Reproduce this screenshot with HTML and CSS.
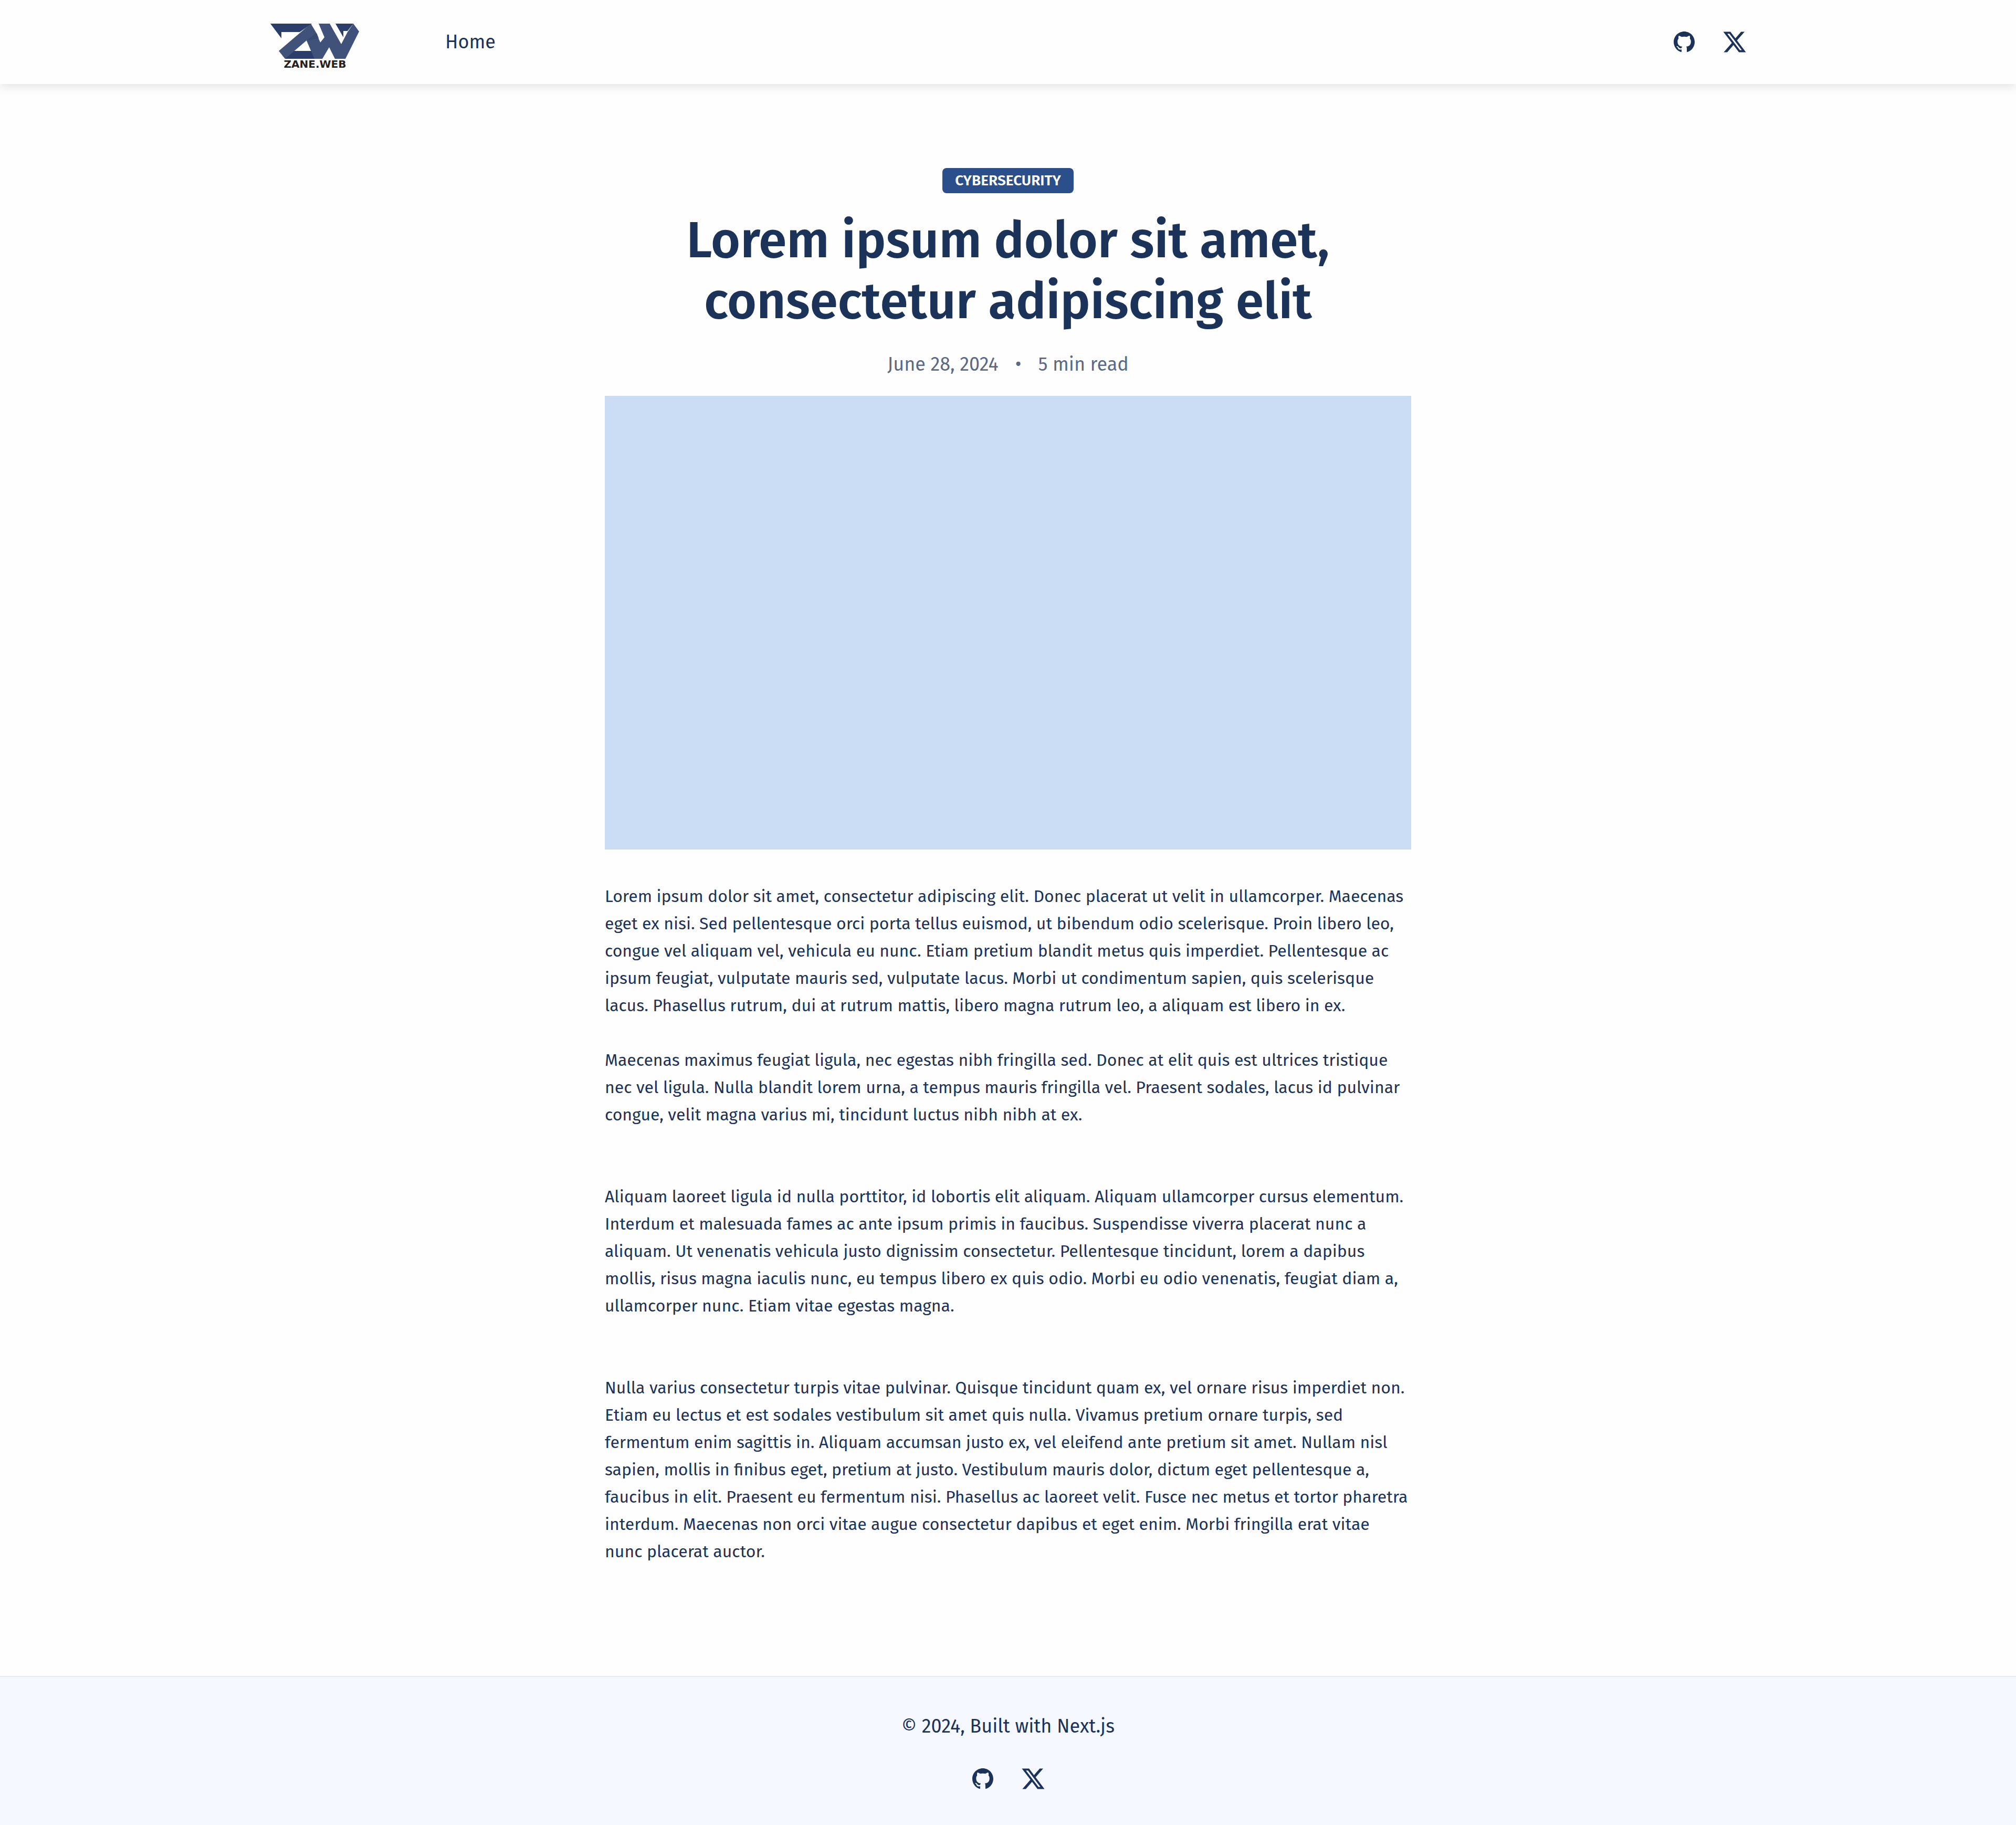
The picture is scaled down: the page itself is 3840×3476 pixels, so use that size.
FILE: index.html
```html
<!DOCTYPE html>
<html lang="en">
<head>
<meta charset="utf-8">
<meta name="viewport" content="width=device-width, initial-scale=1">
<title>Lorem ipsum dolor sit amet, consectetur adipiscing elit</title>
<link rel="stylesheet" href="styles.css">
</head>
<body>
<svg class="sprite" aria-hidden="true">
  <symbol id="icon-github" viewBox="0 0 24 24">
    <path d="M12.001 2C6.476 2 2.001 6.475 2.001 12c0 4.425 2.863 8.163 6.838 9.488.5.087.687-.213.687-.475 0-.238-.012-1.025-.012-1.863-2.513.463-3.163-.612-3.363-1.175-.112-.287-.6-1.175-1.025-1.412-.35-.188-.85-.65-.012-.663.787-.012 1.35.725 1.537 1.025.9 1.513 2.338 1.088 2.913.825.087-.65.35-1.087.637-1.337-2.225-.25-4.55-1.113-4.55-4.938 0-1.087.388-1.987 1.025-2.687-.1-.25-.45-1.275.1-2.65 0 0 .838-.263 2.75 1.025a9.28 9.28 0 0 1 2.5-.338c.85 0 1.7.113 2.5.338 1.913-1.3 2.75-1.025 2.75-1.025.55 1.375.2 2.4.1 2.65.638.7 1.025 1.587 1.025 2.687 0 3.838-2.337 4.688-4.562 4.938.362.312.675.912.675 1.85 0 1.337-.013 2.412-.013 2.75 0 .262.188.575.688.475A10.02 10.02 0 0 0 22.001 12c0-5.525-4.475-10-10-10Z"/>
  </symbol>
  <symbol id="icon-x" viewBox="0 0 24 24">
    <path d="M18.205 2.25h3.308l-7.227 8.26 8.502 11.24H16.13l-5.214-6.817L4.95 21.75H1.64l7.73-8.835L1.215 2.25H8.04l4.713 6.231 5.45-6.231Zm-1.161 17.52h1.833L7.045 4.126H5.078L17.044 19.77Z"/>
  </symbol>
</svg>

<header class="site-header">
  <div class="site-header__inner">
    <a class="logo" href="#" aria-label="Zane.Web">
      <svg class="logo__mark" viewBox="0 0 170 67" aria-hidden="true">
        <path fill="#2b3e6b" d="M0 0H79L56 16H21V28Z"/>
        <path fill="#2b3e6b" d="M37 52H78L86 67H28Z"/>
        <path fill="#384a74" d="M69 32 87 18 95 36 84 67Z"/>
        <path fill="#41527a" d="M77 0 89 20 69 32 28 67 16 52Z"/>
        <path fill="#41527a" d="M92 0H113L135 39 147 16 158 0 169 15 143 67H123L112 45 99 67H84L69 32 87 18 95 36 103 26Z"/>
        <path fill="#384a74" d="M69 32 87 18 89 20 92 28Z"/>
        <path fill="#2b3e6b" d="M124 0H158L147 14H139V26Z"/>
      </svg>
      <span class="logo__name">ZANE.WEB</span>
    </a>
    <nav class="nav" aria-label="Main"><a href="#">Home</a></nav>
    <div class="socials">
      <a href="#" aria-label="GitHub"><svg class="icon"><use href="#icon-github"/></svg></a>
      <a href="#" aria-label="X"><svg class="icon"><use href="#icon-x"/></svg></a>
    </div>
  </div>
</header>

<main class="article">
  <header class="article__head">
    <a class="tag" href="#">CYBERSECURITY</a>
    <h1 class="article__title">Lorem ipsum dolor sit amet, consectetur adipiscing elit</h1>
    <div class="article__meta"><time datetime="2024-06-28">June 28, 2024</time><span>•</span><span>5 min read</span></div>
  </header>
  <div class="article__cover"></div>
  <div class="article__body">
    <p>Lorem ipsum dolor sit amet, consectetur adipiscing elit. Donec placerat ut velit in ullamcorper. Maecenas
    eget ex nisi. Sed pellentesque orci porta tellus euismod, ut bibendum odio scelerisque. Proin libero leo,
    congue vel aliquam vel, vehicula eu nunc. Etiam pretium blandit metus quis imperdiet. Pellentesque ac
    ipsum feugiat, vulputate mauris sed, vulputate lacus. Morbi ut condimentum sapien, quis scelerisque
    lacus. Phasellus rutrum, dui at rutrum mattis, libero magna rutrum leo, a aliquam est libero in ex.</p>
    <p>Maecenas maximus feugiat ligula, nec egestas nibh fringilla sed. Donec at elit quis est ultrices tristique
    nec vel ligula. Nulla blandit lorem urna, a tempus mauris fringilla vel. Praesent sodales, lacus id pulvinar
    congue, velit magna varius mi, tincidunt luctus nibh nibh at ex.</p>
    <p class="section-start">Aliquam laoreet ligula id nulla porttitor, id lobortis elit aliquam. Aliquam ullamcorper cursus elementum.
    Interdum et malesuada fames ac ante ipsum primis in faucibus. Suspendisse viverra placerat nunc a
    aliquam. Ut venenatis vehicula justo dignissim consectetur. Pellentesque tincidunt, lorem a dapibus
    mollis, risus magna iaculis nunc, eu tempus libero ex quis odio. Morbi eu odio venenatis, feugiat diam a,
    ullamcorper nunc. Etiam vitae egestas magna.</p>
    <p class="section-start">Nulla varius consectetur turpis vitae pulvinar. Quisque tincidunt quam ex, vel ornare risus imperdiet non.
    Etiam eu lectus et est sodales vestibulum sit amet quis nulla. Vivamus pretium ornare turpis, sed
    fermentum enim sagittis in. Aliquam accumsan justo ex, vel eleifend ante pretium sit amet. Nullam nisl
    sapien, mollis in finibus eget, pretium at justo. Vestibulum mauris dolor, dictum eget pellentesque a,
    faucibus in elit. Praesent eu fermentum nisi. Phasellus ac laoreet velit. Fusce nec metus et tortor pharetra
    interdum. Maecenas non orci vitae augue consectetur dapibus et eget enim. Morbi fringilla erat vitae
    nunc placerat auctor.</p>
  </div>
</main>

<footer class="site-footer">
  <p>© 2024, Built with Next.js</p>
  <div class="socials">
    <a href="#" aria-label="GitHub"><svg class="icon"><use href="#icon-github"/></svg></a>
    <a href="#" aria-label="X"><svg class="icon"><use href="#icon-x"/></svg></a>
  </div>
</footer>
</body>
</html>
```

FILE: styles.css
```css
*, *::before, *::after { box-sizing: border-box; }

body {
  display: flex;
  flex-direction: column;
  min-height: 100vh;
  margin: 0;
  background: #fefefe;
  color: #1c3359;
  font-family: "Fira Sans", "Noto Sans", sans-serif;
  font-size: 32px;
  line-height: 52px;
}

a { color: inherit; text-decoration: none; }
p, h1 { margin: 0; }

.sprite { position: absolute; width: 0; height: 0; }

.site-header {
  background: #fefefe;
  box-shadow: 0 4px 20px rgba(0, 0, 0, 0.12);
}

.site-header__inner {
  display: flex;
  align-items: center;
  max-width: 2880px;
  height: 160px;
  margin: 0 auto;
  padding: 0 32px;
}

.logo {
  display: flex;
  flex-direction: column;
  align-items: center;
  width: 176px;
  padding-top: 16px;
}

.logo__mark { display: block; width: 170px; height: 67px; }

.logo__name {
  color: #222;
  font-family: "DejaVu Sans", sans-serif;
  font-size: 20px;
  font-weight: 700;
  line-height: 20px;
}

.nav {
  margin-left: 160px;
  font-size: 36px;
  line-height: 54px;
}

.socials { display: flex; gap: 48px; }
.site-header .socials { margin-left: auto; }

.icon { display: block; width: 48px; height: 48px; fill: currentColor; }

.article {
  flex: 1;
  width: 100%;
  max-width: 1600px;
  margin: 0 auto;
  padding: 160px 32px 192px;
}

.article__head {
  display: flex;
  flex-direction: column;
  align-items: center;
  text-align: center;
}

.tag {
  padding: 0 24px;
  border-radius: 8px;
  background: #2b4f8a;
  color: #fff;
  font-size: 28px;
  font-weight: 600;
  line-height: 48px;
}

.article__title {
  margin-top: 32px;
  font-size: 96px;
  font-weight: 600;
  line-height: 116px;
}

.article__meta {
  display: flex;
  gap: 32px;
  margin-top: 34px;
  color: #5a6a86;
  font-size: 36px;
  line-height: 56px;
}

.article__cover {
  margin-top: 32px;
  aspect-ratio: 16 / 9;
  background: #cbdcf5;
}

.article__body {
  display: flex;
  flex-direction: column;
  gap: 52px;
  margin-top: 63px;
}

.section-start { margin-top: 52px; }

.site-footer {
  display: flex;
  flex-direction: column;
  align-items: center;
  gap: 48px;
  padding: 66px 32px 64px;
  border-top: 2px solid #e6ebf3;
  background: #f5f8ff;
  font-size: 36px;
  line-height: 56px;
}
```
